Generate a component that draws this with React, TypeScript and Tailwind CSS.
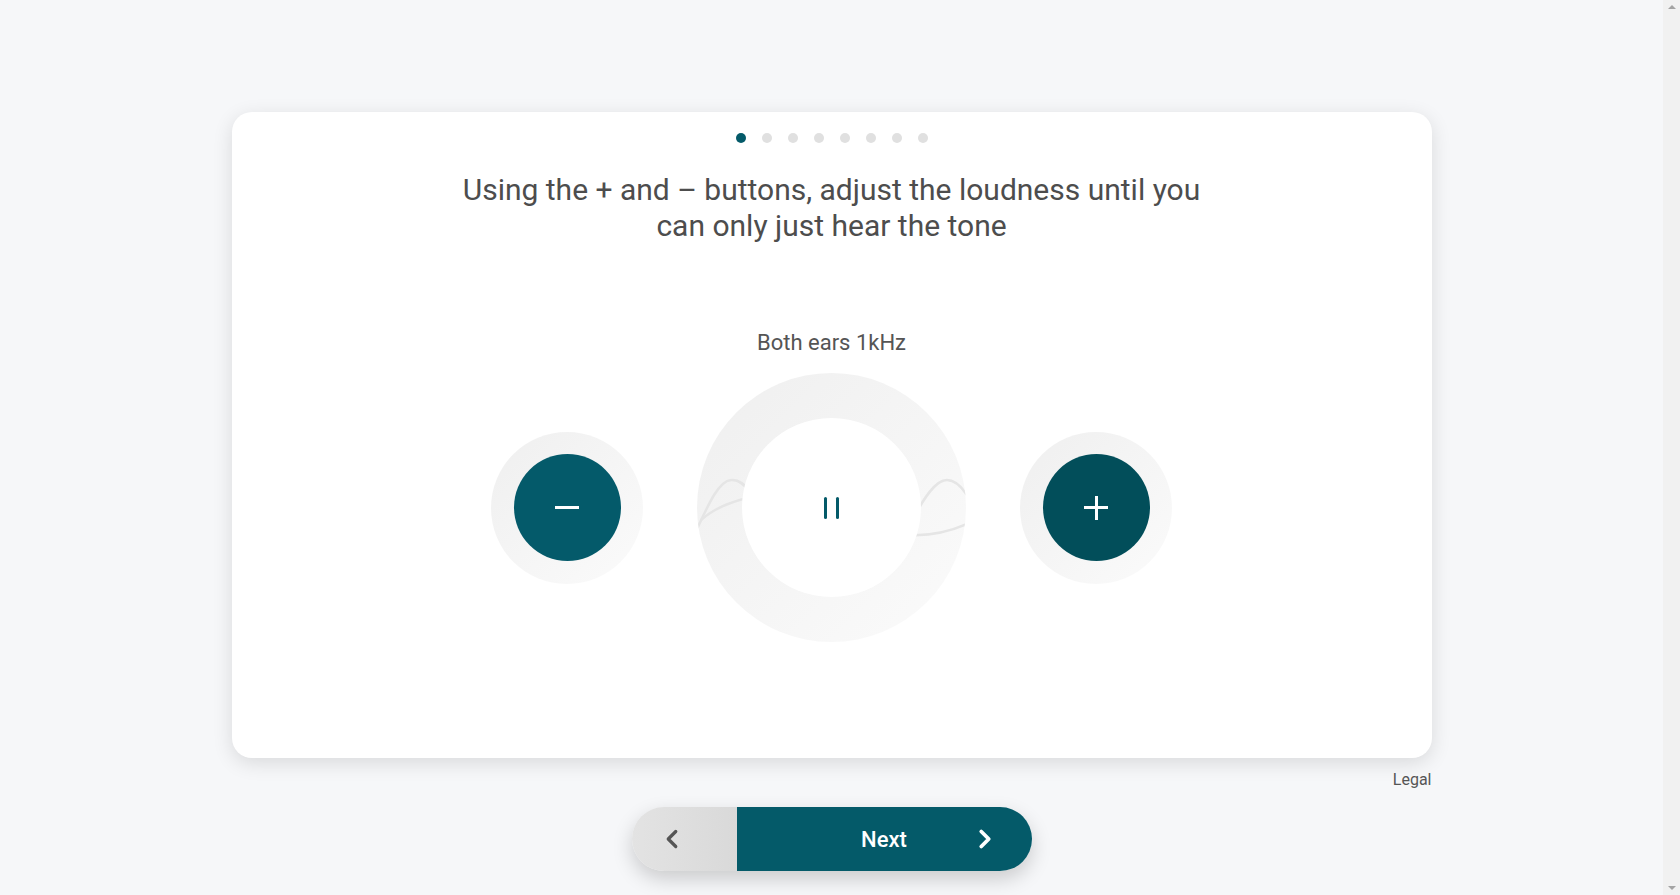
import { ChevronLeft, ChevronRight } from 'lucide-react';

const TEAL = 'bg-[#045a69]';

function Dots() {
  return (
    <div className="flex items-center justify-center gap-[16px] pt-[21px]">
      {Array.from({ length: 8 }).map((_, i) => (
        <span
          key={i}
          className={`block h-[10px] w-[10px] rounded-full ${i === 0 ? 'bg-[#045a69]' : 'bg-[#e0e0e0]'}`}
        />
      ))}
    </div>
  );
}

function SideButton({ kind }: { kind: 'minus' | 'plus' }) {
  return (
    <div className="flex h-[152px] w-[152px] items-center justify-center rounded-full bg-gradient-to-br from-[#efefef] to-[#fbfbfb]">
      <button
        className={`relative flex h-[107px] w-[107px] items-center justify-center rounded-full ${kind === 'minus' ? 'bg-[#045a6a]' : 'bg-[#024e5a]'}`}
        aria-label={kind === 'minus' ? 'Quieter' : 'Louder'}
      >
        <span className="block h-[3px] w-[24px] bg-white" />
        {kind === 'plus' && <span className="absolute block h-[24px] w-[3px] bg-white" />}
      </button>
    </div>
  );
}

function ToneRing() {
  return (
    <div className="relative flex h-[269px] w-[269px] items-center justify-center overflow-hidden rounded-full bg-gradient-to-br from-[#efefef] to-[#fbfbfb]">
      {/* faint wave lines behind the play button */}
      <svg className="absolute inset-0" width="269" height="269" viewBox="0 0 269 269" fill="none">
        <path
          d="M0 156 C 12 130, 22 108, 34 107 C 42 106, 48 112, 54 120"
          stroke="#e5e5e5"
          strokeWidth="2.5"
        />
        <path d="M4 147 C 16 136, 30 130, 50 125" stroke="#e5e5e5" strokeWidth="2.5" />
        <path
          d="M214 150 C 226 126, 238 107, 250 107 C 258 107, 264 113, 270 122"
          stroke="#e5e5e5"
          strokeWidth="2.5"
        />
        <path d="M212 162 C 232 163, 252 159, 270 151" stroke="#e5e5e5" strokeWidth="2.5" />
      </svg>
      <button className="relative flex h-[179px] w-[179px] items-center justify-center gap-[9px] rounded-full bg-white" aria-label="Pause">
        <span className="block h-[22px] w-[3px] rounded-full bg-[#045a69]" />
        <span className="block h-[22px] w-[3px] rounded-full bg-[#045a69]" />
      </button>
    </div>
  );
}

function Scrollbar() {
  return (
    <div className="flex h-[895px] w-[17px] shrink-0 flex-col items-center justify-between bg-[#f1f1f1] py-[5px]">
      <span className="block h-0 w-0 border-x-[4px] border-b-[4px] border-x-transparent border-b-[#a3a3a3]" />
      <span className="block h-0 w-0 border-x-[4px] border-t-[4px] border-x-transparent border-t-[#a3a3a3]" />
    </div>
  );
}

export default function App() {
  return (
    <div className="flex h-[895px] overflow-hidden bg-[#f6f7f9] font-['Roboto',sans-serif]">
      <div className="flex flex-1 flex-col items-center pt-[112px]">
        <div className="h-[646px] w-[1200px] rounded-[20px] bg-white shadow-[0_5px_20px_rgba(0,0,0,0.12)]">
          <Dots />
          <h1 className="mx-auto mt-[29px] max-w-[770px] text-center text-[30px] font-normal leading-[36px] text-[#4d4d4d]">
            Using the + and – buttons, adjust the loudness until you can only just hear the tone
          </h1>
          <p className="mt-[85px] text-center text-[22px] leading-[28px] text-[#555]">Both ears 1kHz</p>
          <div className="mt-[16px] flex items-center justify-center gap-[54px]">
            <SideButton kind="minus" />
            <ToneRing />
            <SideButton kind="plus" />
          </div>
        </div>

        <div className="mt-[12px] w-[1200px] text-right text-[16px] leading-[20px] text-[#555]">Legal</div>

        <div className="mt-[17px] flex h-[64px] w-[400px] overflow-hidden rounded-full shadow-[0_8px_20px_rgba(0,0,0,0.18)]">
          <button className="flex w-[105px] items-center justify-start bg-gradient-to-r from-[#e3e3e3] to-[#d9d9d9] pl-[25px] text-[#555]">
            <ChevronLeft size={30} strokeWidth={2.6} />
          </button>
          <button className={`relative flex flex-1 items-center justify-center ${TEAL} text-white`}>
            <span className="text-[22px] font-medium">Next</span>
            <ChevronRight size={30} strokeWidth={3} className="absolute right-[32px]" />
          </button>
        </div>
      </div>
      <Scrollbar />
    </div>
  );
}
